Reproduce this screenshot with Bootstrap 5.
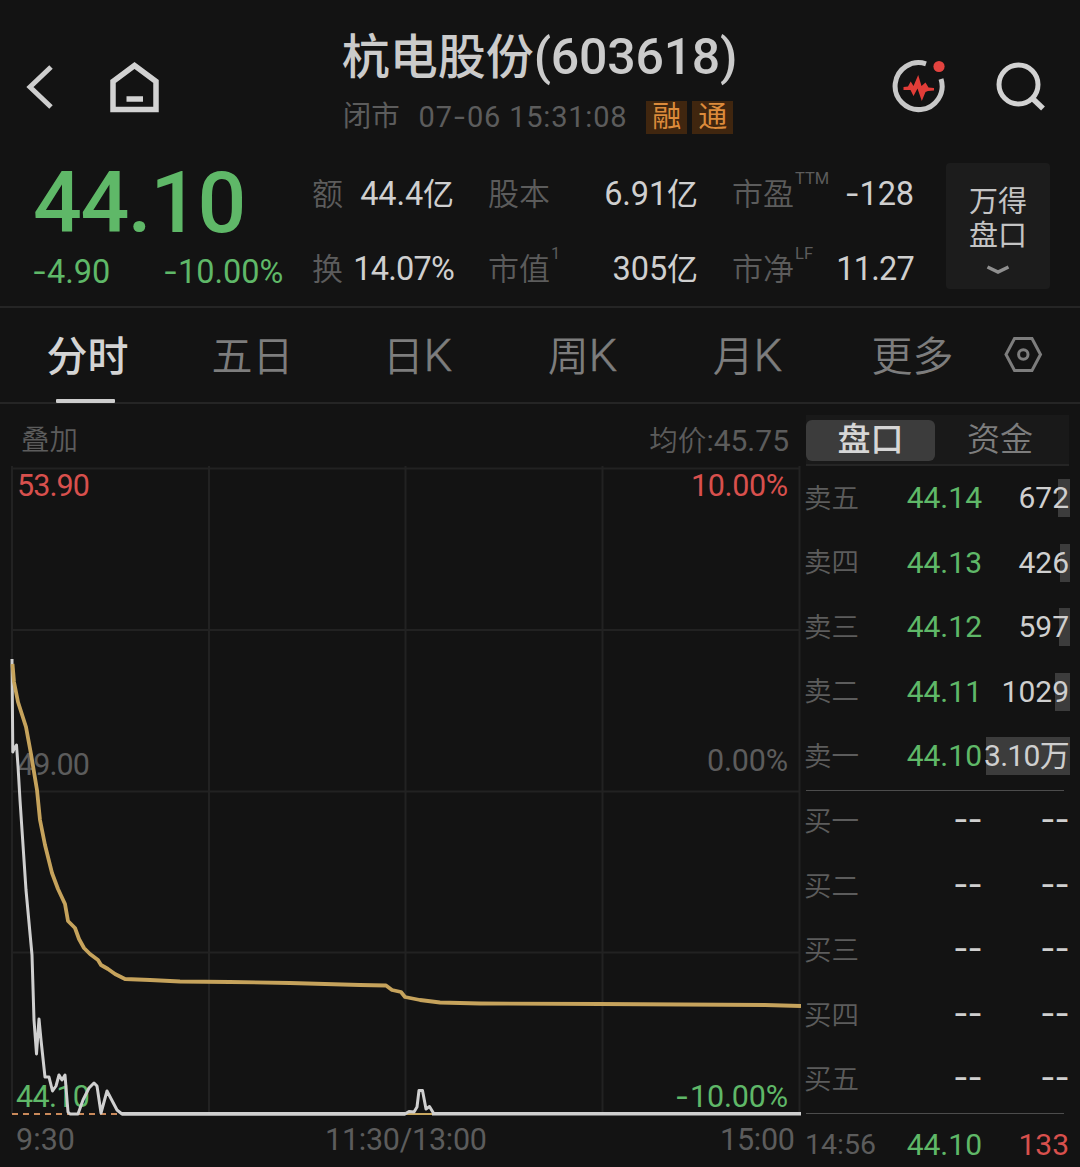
<!DOCTYPE html>
<html lang="zh-CN">
<head>
<meta charset="utf-8">
<meta name="viewport" content="width=device-width, initial-scale=1">
<title>杭电股份(603618)</title>
<link rel="stylesheet" href="https://cdn.jsdelivr.net/npm/bootstrap@5.3.0/dist/css/bootstrap.min.css">
<style>
  :root { --ink:#cfcfcf; --dim:#5c5c5c; --mid:#7d7d7d; --up:#d8504d; --down:#5fb868; --rule:#252525; }
  body { background:#131313; color:var(--ink); font-family:Roboto,"Noto Sans CJK SC",sans-serif; line-height:1; width:1080px; height:1167px; overflow:hidden; }
  .dash { font-family:Inter,sans-serif; }
  .c-dim { color:var(--dim); } .c-up { color:var(--up); } .c-down { color:var(--down); }
  svg { display:block; }

  .top-bar { height:150px; display:grid; grid-template-columns:1fr auto 1fr; padding:24px 33px 0 26px; }
  .top-icons { height:125px; }
  .title-block { margin-left:6px; }
  .stock-name { font-size:48px; font-weight:500; line-height:64px; color:#cbcbcb; padding-top:1px; }
  .stock-name .code { font-size:50px; letter-spacing:-.2px; }
  .stock-time { font-size:28.5px; line-height:34px; margin-top:10px; padding:0 4px 0 1px; }
  .stock-time .num { font-size:29px; letter-spacing:.8px; }
  .flags { gap:5px; }
  .flag { width:41px; height:33px; background:#40260f; color:#dc8b3b; font-size:29px; line-height:32px; text-align:center; }

  .quote { height:156px; }
  .price-box { width:312px; padding-left:33px; }
  .price { font-size:86px; font-weight:500; line-height:86px; margin-top:10px; letter-spacing:-1.5px; }
  .change { font-size:32.5px; line-height:36px; margin:8px 0 0 -1px; }
  .facts { display:grid; grid-template-columns:142px 210px 182px; column-gap:34px; grid-template-rows:75px 75px; padding-top:7px; width:603px; }
  .fact { display:flex; justify-content:space-between; align-items:center; height:75px; white-space:nowrap; }
  .fact .key { color:var(--dim); font-size:31px; position:relative; font-weight:350; }
  .fact .key i { position:absolute; left:100%; top:-8px; font-size:16.5px; font-weight:400; font-style:normal; font-family:Roboto; margin-left:1px; }
  .fact .val { font-size:32.5px; letter-spacing:-.1px; }
  .fact .val.tight { letter-spacing:-.8px; }
  .fact .val b { font-size:31px; font-weight:400; }
  .book-btn { width:104px; height:126px; background:#1c1c1c; border-radius:4px; font-size:29px; line-height:34.5px; margin:13px 0 0 31px; padding-top:21.5px; color:#c4c4c4; }
  .book-btn svg { margin-top:10px; }

  .period-tabs { height:98px; border-top:2px solid var(--rule); border-bottom:2px solid var(--rule); padding-left:5px; }
  .period-tabs .tab { width:165px; height:95px; font-size:41px; line-height:98px; text-align:center; color:var(--mid); position:relative; font-weight:350; }
  .period-tabs .tab.on { color:#d4d4d4; font-weight:500; }
  .period-tabs .tab.on::after { content:""; position:absolute; left:51px; width:59px; bottom:0; height:4px; background:#cdcdcd; border-radius:1px; }
  .period-tabs .tab .lat { font-size:45px; font-weight:300; line-height:90px; -webkit-text-stroke:.5px var(--mid); }

  .chart-col { width:801px; }
  .chart-head { height:62px; padding:12px 12px 0 21px; font-size:28.5px; }
  .chart-head .key { font-weight:350; }
  .chart-head .num { font-size:30px; }
  .chart text { font-size:30.5px; font-family:Roboto,sans-serif; }

  .book-col { width:264px; margin-left:4px; }
  .seg { height:51px; margin:11px 0 0 1px; background:#191919; border-bottom:2px solid var(--rule); font-size:33px; }
  .seg .pick { width:129px; height:41px; background:#3c3c3c; border-radius:6px; text-align:center; line-height:40px; font-weight:500; color:#d6d6d6; margin-top:5px; }
  .seg .other { flex:1; text-align:center; line-height:40px; margin-top:5px; color:#7d7d7d; padding-right:4px; font-weight:350; }
  .lvl { height:64.5px; display:grid; grid-template-columns:70px 107px 1fr; align-items:center; position:relative; font-size:30px; white-space:nowrap; }
  .lvl .who { font-size:27.5px; color:var(--dim); font-weight:350; margin-left:-1px; }
  .lvl .px, .lvl .qty { text-align:right; position:relative; }
  .lvl .wan { letter-spacing:-.7px; }
  .lvl .dash { font-size:33px; line-height:20px; letter-spacing:-.8px; padding-bottom:5px; }
  .lvl .clock { font-size:28.5px; color:var(--dim); }
  .lvl .bar { position:absolute; right:-1px; top:13px; height:38px; background:#3c3c3c; }
  .book-rule { height:1px; background:#4c4c4c; margin:1px 5px 0 1px; }
  .book-rule + .lvl { margin-top:-1px; }
</style>
</head>
<body>
<header class="top-bar">
  <div class="top-icons d-flex align-items-center">
    <svg width="28" height="46" viewBox="0 0 28 46"><path d="M25 3 4 23 25 43" fill="none" stroke="#cecece" stroke-width="5"/></svg>
    <svg class="ms-5" width="60" height="56" viewBox="0 0 60 56"><path d="M11 22.500 32.500 6.500 54 22.500V50.500H11Z" fill="none" stroke="#d2d2d2" stroke-width="5.500"/><path d="M24.500 40H41" stroke="#d2d2d2" stroke-width="5.500"/></svg>
  </div>
  <div class="title-block">
    <div class="stock-name">杭电股份<span class="code">(603618)</span></div>
    <div class="stock-time c-dim d-flex align-items-center justify-content-between">
      <span>闭市</span><span class="num">07<span class="dash">-</span>06&nbsp;15:31:08</span>
      <span class="flags d-flex"><span class="flag">融</span><span class="flag">通</span></span>
    </div>
  </div>
  <div class="top-icons d-flex align-items-center justify-content-end">
    <svg width="56" height="56" viewBox="0 0 56 56"><path d="M34 4.800A23.500 23.500 0 1 0 49 20" fill="none" stroke="#c8c8c8" stroke-width="5"/><path d="M11.500 28 16 27.500 18.700 22.500 21.500 27 26.200 16 29.500 27 33.500 23.500 36.500 28.500 42 29V31.500L36 32 33.500 33 29.800 42 25.500 29.500 21.500 37 18.500 31H11.500Z" fill="#e23d38"/><circle cx="47" cy="7.500" r="5.600" fill="#e3433f"/></svg>
    <svg style="margin-left:47px" width="52" height="52" viewBox="0 0 52 52"><circle cx="23.500" cy="23.500" r="19.500" fill="none" stroke="#d2d2d2" stroke-width="5"/><path d="m37 37 11 10.500" stroke="#d2d2d2" stroke-width="5.500"/></svg>
  </div>
</header>

<section class="quote d-flex">
  <div class="price-box c-down">
    <div class="price">44.10</div>
    <div class="change d-flex"><span style="width:131px"><span class="dash">-</span>4.90</span><span><span class="dash">-</span>10.00%</span></div>
  </div>
  <div class="facts">
    <div class="fact"><span class="key">额</span><span class="val">44.4<b>亿</b></span></div>
    <div class="fact"><span class="key">股本</span><span class="val">6.91<b>亿</b></span></div>
    <div class="fact"><span class="key">市盈<i>TTM</i></span><span class="val"><span class="dash">-</span>128</span></div>
    <div class="fact"><span class="key">换</span><span class="val tight">14.07%</span></div>
    <div class="fact"><span class="key">市值<i>1</i></span><span class="val">305<b>亿</b></span></div>
    <div class="fact"><span class="key">市净<i>LF</i></span><span class="val tight">11.27</span></div>
  </div>
  <div class="book-btn text-center">万得<br>盘口
    <svg class="mx-auto" width="24" height="12" viewBox="0 0 24 12"><path d="m1.500 3 10.500 5 10.500-5" fill="none" stroke="#8f8f8f" stroke-width="3.500"/></svg>
  </div>
</section>

<nav class="period-tabs d-flex">
  <div class="tab on">分时</div>
  <div class="tab">五日</div>
  <div class="tab">日<span class="lat">K</span></div>
  <div class="tab">周<span class="lat">K</span></div>
  <div class="tab">月<span class="lat">K</span></div>
  <div class="tab">更多</div>
  <svg class="align-self-center ms-2" width="40" height="36" viewBox="0 0 40 36"><path d="M11.500 1.500H29L37.500 17.500 29 33.500H11.500L3 17.500Z" fill="none" stroke="#7d7d7d" stroke-width="3"/><circle cx="20.300" cy="17.500" r="4.700" fill="none" stroke="#7d7d7d" stroke-width="3"/></svg>
</nav>

<main class="d-flex">
  <div class="chart-col">
    <div class="chart-head c-dim d-flex justify-content-between align-items-center">
      <span class="key">叠加</span><span><span class="key">均价</span><span class="num">:45.75</span></span>
    </div>
    <svg class="chart" width="801" height="701" viewBox="0 466 801 701">
      <g stroke="#222" stroke-width="2" fill="none">
        <path d="M12 468.500H800M12 630H800M12 791.500H800M12 952.500H800"/>
        <path d="M12 466V1114M209 466V1114M405.500 466V1114M602.500 466V1114M799.500 466V1114"/>
      </g>
      <g fill="#d8504d"><text x="17" y="496" textLength="73">53.90</text><text x="691" y="496" textLength="97">10.00%</text></g>
      <g fill="#5c5c5c"><text x="17" y="775" textLength="73">49.00</text><text x="707" y="771" textLength="81">0.00%</text>
        <text x="16" y="1150" textLength="59">9:30</text><text x="325" y="1150" textLength="162">11:30/13:00</text><text x="720" y="1150" textLength="75">15:00</text></g>
      <g fill="#5fb868"><text x="16" y="1107" textLength="74">44.10</text><text x="675" y="1107"><tspan class="dash" font-family="Inter">-</tspan></text><text x="690" y="1107" textLength="98">10.00%</text></g>
      <path d="M12 1114H122" stroke="#c9895a" stroke-width="2" stroke-dasharray="6 5"/>
      <path d="M405 1114H434" stroke="#c9a860" stroke-width="2"/>
      <path d="M12 659 12.800 752 14 749 16.500 745 18 766 20 800 26 890 32 955 34 1020 36.500 1054 39 1019 41 1040 45 1077 49 1077 52.500 1091 56 1086 59 1075 62 1080 65 1075 68 1112 70 1114H78L83 1100 89 1088 94 1083 97 1086 101 1113 107 1091 117 1110 122 1114H405L409 1111.500 414 1112 417 1107 419 1090.500H422.500L426 1109 429.500 1106.500 434 1114" fill="none" stroke="#d0d0d0" stroke-width="3" stroke-linejoin="round"/>
      <path d="M122 1113.800H405M432 1113.800H801" stroke="#cfcfcf" stroke-width="3.600"/>
      <path d="M12.500 664 14 682 18 702 26 727 31 754 37 790 40 820 45 845 52 873 58 889 65 904 68 921 75 928 79 939 84 948 90 954 98 960 101 965 108 969 115 974 125 979 150 980 180 981.500 230 982 290 983 360 985 386 985.500 392 990 401 992 405 997 420 1000 440 1002.500 480 1003.500 600 1004 765 1005 801 1006" fill="none" stroke="#c6a35c" stroke-width="3.800" stroke-linejoin="round"/>
    </svg>
  </div>

  <aside class="book-col">
    <div class="seg d-flex"><div class="pick">盘口</div><div class="other">资金</div></div>
    <div class="lvl"><span class="who">卖五</span><span class="px c-down">44.14</span><span class="bar" style="width:12px"></span><span class="qty">672</span></div>
    <div class="lvl"><span class="who">卖四</span><span class="px c-down">44.13</span><span class="bar" style="width:10px"></span><span class="qty">426</span></div>
    <div class="lvl"><span class="who">卖三</span><span class="px c-down">44.12</span><span class="bar" style="width:11px"></span><span class="qty">597</span></div>
    <div class="lvl"><span class="who">卖二</span><span class="px c-down">44.11</span><span class="bar" style="width:15px"></span><span class="qty">1029</span></div>
    <div class="lvl"><span class="who">卖一</span><span class="px c-down">44.10</span><span class="bar" style="width:84px"></span><span class="qty wan">3.10万</span></div>
    <div class="book-rule"></div>
    <div class="lvl"><span class="who">买一</span><span class="px dash">--</span><span class="qty dash">--</span></div>
    <div class="lvl"><span class="who">买二</span><span class="px dash">--</span><span class="qty dash">--</span></div>
    <div class="lvl"><span class="who">买三</span><span class="px dash">--</span><span class="qty dash">--</span></div>
    <div class="lvl"><span class="who">买四</span><span class="px dash">--</span><span class="qty dash">--</span></div>
    <div class="lvl"><span class="who">买五</span><span class="px dash">--</span><span class="qty dash">--</span></div>
    <div class="book-rule"></div>
    <div class="lvl"><span class="clock">14:56</span><span class="px c-down">44.10</span><span class="qty c-up">133</span></div>
  </aside>
</main>
<script src="https://cdn.jsdelivr.net/npm/bootstrap@5.3.0/dist/js/bootstrap.bundle.min.js"></script>
</body>
</html>
